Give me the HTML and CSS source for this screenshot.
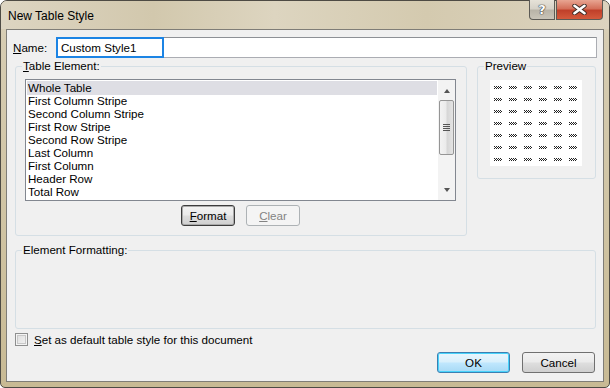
FILE: index.html
```html
<!DOCTYPE html>
<html lang="en">
<head>
  <meta charset="UTF-8" />
  <title>New Table Style</title>
  <link rel="stylesheet" href="styles.css">
</head>
<body>
  <div class="window">
    <div class="titlebar">
      <span class="title">New Table Style</span>
      <div class="caption-buttons">
        <div class="cap help">?</div>
        <div class="cap close">
          <svg width="15" height="11" viewBox="0 0 15 11">
            <path d="M2.5 1.8 L12.5 9.2 M12.5 1.8 L2.5 9.2" stroke="#3b2a24" stroke-width="4.4" stroke-linecap="round" />
            <path d="M2.5 1.8 L12.5 9.2 M12.5 1.8 L2.5 9.2" stroke="#fff" stroke-width="2.6" stroke-linecap="round" />
          </svg>
        </div>
      </div>
    </div>

    <div class="client">
      <div class="name-row">
        <label><u>N</u>ame:</label>
        <div class="name-field"><span class="name-value">Custom Style1</span></div>
      </div>

      <div class="middle">
        <fieldset class="group table-group">
          <legend><u>T</u>able Element:</legend>
          <div class="listbox">
            <ul class="items">
              <li class="selected">Whole Table</li>
              <li>First Column Stripe</li>
              <li>Second Column Stripe</li>
              <li>First Row Stripe</li>
              <li>Second Row Stripe</li>
              <li>Last Column</li>
              <li>First Column</li>
              <li>Header Row</li>
              <li>Total Row</li>
            </ul>
            <div class="scrollbar">
              <span class="arrow up"></span>
              <div class="thumb"><span class="grip"></span></div>
              <span class="arrow down"></span>
            </div>
          </div>
          <div class="group-buttons">
            <button class="btn focused"><u>F</u>ormat</button>
            <button class="btn" disabled><u>C</u>lear</button>
          </div>
        </fieldset>

        <fieldset class="group preview-group">
          <legend>Preview</legend>
          <div class="preview" id="preview"></div>
        </fieldset>
      </div>

      <fieldset class="group format-group">
        <legend>Element Formatting:</legend>
      </fieldset>

      <div class="check-row">
        <span class="checkbox"></span>
        <span><u>S</u>et as default table style for this document</span>
      </div>

      <div class="dialog-buttons">
        <button class="btn default">OK</button>
        <button class="btn">Cancel</button>
      </div>
    </div>
  </div>

  <script>
    const preview = document.getElementById("preview");
    for (let i = 0; i < 42; i++) {
      const cell = document.createElement("span");
      cell.className = "cell";
      preview.appendChild(cell);
    }
  </script>
</body>
</html>
```

FILE: styles.css
```css
* {
  box-sizing: border-box;
  margin: 0;
  padding: 0;
}

body {
  width: 610px;
  height: 388px;
  overflow: hidden;
  background: #fff;
  font-family: "Liberation Sans", Arial, sans-serif;
  font-size: 11.6px;
  color: #000;
}

.window {
  width: 610px;
  height: 388px;
  display: flex;
  flex-direction: column;
  border: 1px solid #4e4b44;
  border-radius: 7px 7px 5px 5px;
  background: linear-gradient(180deg, #dcd4c0 0%, #d6ccb2 10%, #cfc3a2 60%, #c8ba94 100%);
}

.titlebar {
  height: 28px;
  flex: none;
  display: flex;
  align-items: flex-start;
  background: linear-gradient(90deg, #ddd5c2 0%, #d2c8ad 25%, #ddd5c0 45%, #d4caaf 70%, #dcd3bf 100%);
  border-radius: 6px 6px 0 0;
}

.title {
  font-size: 12px;
  margin: 8px 0 0 7px;
  color: #000;
}

.caption-buttons {
  margin: -1px 6px 0 auto;
  display: flex;
  gap: 1px;
}

.cap {
  height: 20px;
  border: 1px solid #5c5a55;
  border-top: none;
  display: flex;
  align-items: center;
  justify-content: center;
}

.help {
  width: 26px;
  border-radius: 0 0 0 4px;
  background: linear-gradient(180deg, #e6e2d8 0%, #d6d2c8 45%, #b9b4a8 55%, #c9c4b8 100%);
  font-family: "DejaVu Sans", sans-serif;
  font-weight: bold;
  font-size: 13px;
  color: #fff;
  text-shadow: 0 0 1px #333, 0 0 1px #333, 0 0 1px #333;
}

.close {
  width: 47px;
  border-radius: 0 0 4px 0;
  background: linear-gradient(180deg, #e8a592 0%, #d4705a 45%, #c0402a 55%, #d45a3c 100%);
}

.client {
  flex: 1;
  margin: 0 5px 5px;
  border: 1px solid #7f7d77;
  background: #f0f0f0;
  padding: 7px 7px 0 8px;
  display: flex;
  flex-direction: column;
}

.name-row {
  display: flex;
  align-items: center;
  margin: 0 -1px 0 -3px;
  height: 21px;
}

.name-row label {
  width: 44px;
  padding-left: 1px;
}

.name-field {
  flex: 1;
  height: 21px;
  border: 1px solid #abadb3;
  border-top-color: #8d9095;
  background: #fff;
  display: flex;
}

.name-value {
  width: 108px;
  height: 21px;
  margin: -1px 0 0 -1px;
  border: 2px solid #1c84e4;
  padding: 0 0 0 3px;
  line-height: 17px;
}

.middle {
  display: flex;
  align-items: flex-start;
  gap: 10px;
  margin-top: 1px;
}

.group {
  border: 1px solid #d5dfe5;
  border-radius: 3px;
  min-width: 0;
}

.group legend {
  padding: 0 1px;
  line-height: 14px;
}

.table-group {
  width: 452px;
  padding: 6px 10px 9px 9px;
}

.table-group legend {
  margin-left: -3px;
}

.listbox {
  height: 122px;
  border: 1px solid #828790;
  background: #fff;
  display: flex;
}

.items {
  flex: 1;
  list-style: none;
  padding: 1px 1px 0;
}

.items li {
  height: 13px;
  line-height: 13px;
  padding-left: 1px;
}

.items li.selected {
  height: 14px;
  line-height: 14px;
  background: #dedee4;
  margin-bottom: -1px;
}

.scrollbar {
  width: 17px;
  background: #f3f3f3;
  display: flex;
  flex-direction: column;
  align-items: center;
  padding: 0 1px;
}

.arrow {
  width: 0;
  height: 0;
  border-left: 3.5px solid transparent;
  border-right: 3.5px solid transparent;
}

.arrow.up {
  margin: 9px 0 7px;
  border-bottom: 4px solid #555;
}

.arrow.down {
  margin: auto 0 8px;
  border-top: 4px solid #555;
}

.thumb {
  width: 15px;
  height: 55px;
  border: 1px solid #959595;
  border-radius: 2px;
  background: linear-gradient(90deg, #f2f2f2 0%, #ebebeb 45%, #d6d6d6 55%, #e4e4e4 100%);
  display: flex;
  align-items: center;
  justify-content: center;
}

.grip {
  width: 7px;
  height: 7px;
  background: repeating-linear-gradient(180deg, #555 0 1px, transparent 1px 2px);
}

.group-buttons {
  display: flex;
  justify-content: center;
  gap: 11px;
  margin-top: 4px;
}

.btn {
  width: 54px;
  height: 21px;
  font: inherit;
  color: #000;
  border: 1px solid #707070;
  border-radius: 3px;
  background: linear-gradient(180deg, #f2f2f2 0%, #ebebeb 45%, #dddddd 55%, #cfcfcf 100%);
}

.btn.focused {
  border-color: #3c3c3c;
  box-shadow: inset 0 0 0 1px #aaa;
}

.btn:disabled {
  border-color: #adb2b5;
  background: #f4f4f4;
  color: #838383;
}

.preview-group {
  width: 119px;
  padding: 7px 13px 12px 12px;
}

.preview-group legend {
  margin-left: -6px;
}

.preview {
  width: 92px;
  height: 86px;
  background: #fff;
  display: grid;
  grid-template-columns: repeat(6, 8px);
  grid-auto-rows: 3px;
  column-gap: 7px;
  row-gap: 9px;
  padding: 6px 0 0 4px;
}

.cell {
  width: 8px;
  height: 3px;
  background: repeating-conic-gradient(#222 0 25%, transparent 0 50%) 1px 0 / 2px 2px;
}

.format-group {
  height: 86px;
  margin-top: 7px;
  padding: 0;
}

.format-group legend {
  margin-left: 6px;
}

.check-row {
  display: flex;
  align-items: center;
  gap: 6px;
  height: 13px;
  margin-top: 4px;
}

.checkbox {
  width: 13px;
  height: 13px;
  border: 1px solid #8e8f8f;
  background: linear-gradient(135deg, #dcdcdc 0%, #f4f4f4 100%);
  box-shadow: inset 0 0 0 1px #f4f4f4, inset 0 0 0 2px #c8c8c8;
}

.dialog-buttons {
  display: flex;
  justify-content: flex-end;
  gap: 12px;
  margin: 6px 1px 0 0;
}

.dialog-buttons .btn {
  width: 73px;
}

.btn.default {
  border-color: #3c7fb1;
  box-shadow: inset 0 0 0 1px #48d3fb;
  background: linear-gradient(180deg, #eaf6fd 0%, #d9f0fc 45%, #bee6fd 55%, #a7d9f5 100%);
}
```
